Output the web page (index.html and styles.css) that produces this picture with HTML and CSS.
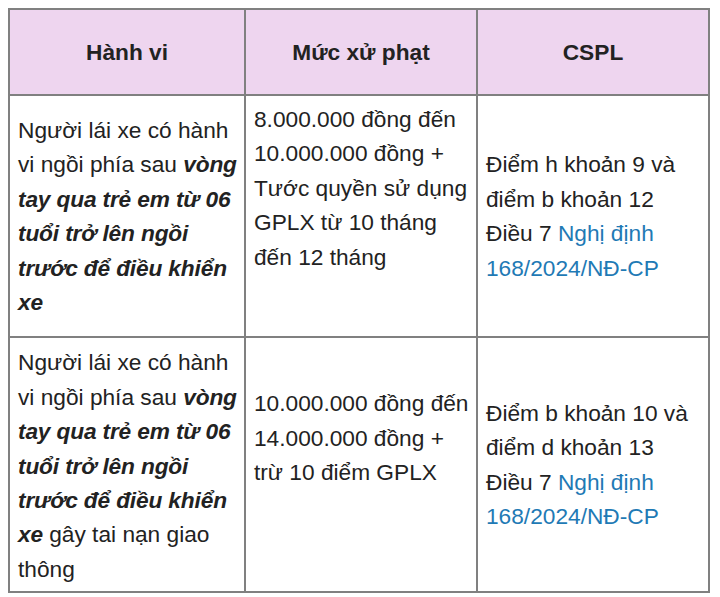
FILE: index.html
```html
<!DOCTYPE html>
<html lang="vi">
<head>
<meta charset="utf-8">
<link rel="stylesheet" href="styles.css">
</head>
<body>
<table class="penalty">
  <colgroup>
    <col class="col-a">
    <col class="col-b">
    <col class="col-c">
  </colgroup>
  <thead>
    <tr>
      <th>Hành vi</th>
      <th>Mức xử phạt</th>
      <th>CSPL</th>
    </tr>
  </thead>
  <tbody>
    <tr class="row-1">
      <td class="act">Người lái xe có hành vi ngồi phía sau <b><i>vòng tay qua trẻ em từ 06 tuổi trở lên ngồi trước để điều khiển xe</i></b></td>
      <td class="fine">8.000.000 đồng đến 10.000.000 đồng + Tước quyền sử dụng GPLX từ 10 tháng đến 12 tháng</td>
      <td class="law">Điểm h khoản 9 và điểm b khoản 12 Điều 7 <a href="#">Nghị định 168/2024/NĐ-CP</a></td>
    </tr>
    <tr class="row-2">
      <td class="act">Người lái xe có hành vi ngồi phía sau <b><i>vòng tay qua trẻ em từ 06 tuổi trở lên ngồi trước để điều khiển xe</i></b> gây tai nạn giao thông</td>
      <td class="fine">10.000.000 đồng đến 14.000.000 đồng + trừ 10 điểm GPLX</td>
      <td class="law">Điểm b khoản 10 và điểm d khoản 13 Điều 7 <a href="#">Nghị định 168/2024/NĐ-CP</a></td>
    </tr>
  </tbody>
</table>
</body>
</html>
```
FILE: styles.css
```css
html, body {
  background: #ffffff;
}
body {
  margin: 8px;
  font-family: "Liberation Sans", Arial, sans-serif;
  color: #222222;
}
.penalty {
  border-collapse: collapse;
  width: 700px;
  table-layout: fixed;
  font-size: 22.7px;
  line-height: 34.4px;
  border: 2px solid #777777;
}
.col-a { width: 236px; }
.col-b { width: 232px; }
.col-c { width: 232px; }
.penalty th,
.penalty td {
  border: 2px solid #808080;
  padding: 0 1px 0 8px;
  text-align: left;
}
.penalty th {
  background: #eed5ef;
  text-align: center;
  font-weight: bold;
  height: 84px;
  padding: 0 8px;
  vertical-align: middle;
}
.penalty b i {
  letter-spacing: -0.15px;
}
.penalty td.act {
  vertical-align: top;
}
.row-1 td.act { padding-top: 17px; padding-bottom: 17px; }
.row-2 td.act { padding-top: 7px; padding-bottom: 5px; }
.penalty td.fine {
  vertical-align: top;
}
.row-1 td.fine { padding-top: 6px; }
.row-2 td.fine { padding-top: 48px; }
.penalty td.law {
  vertical-align: middle;
  padding-right: 12px;
}
.penalty a {
  color: #1f7ab5;
  text-decoration: none;
}
```
